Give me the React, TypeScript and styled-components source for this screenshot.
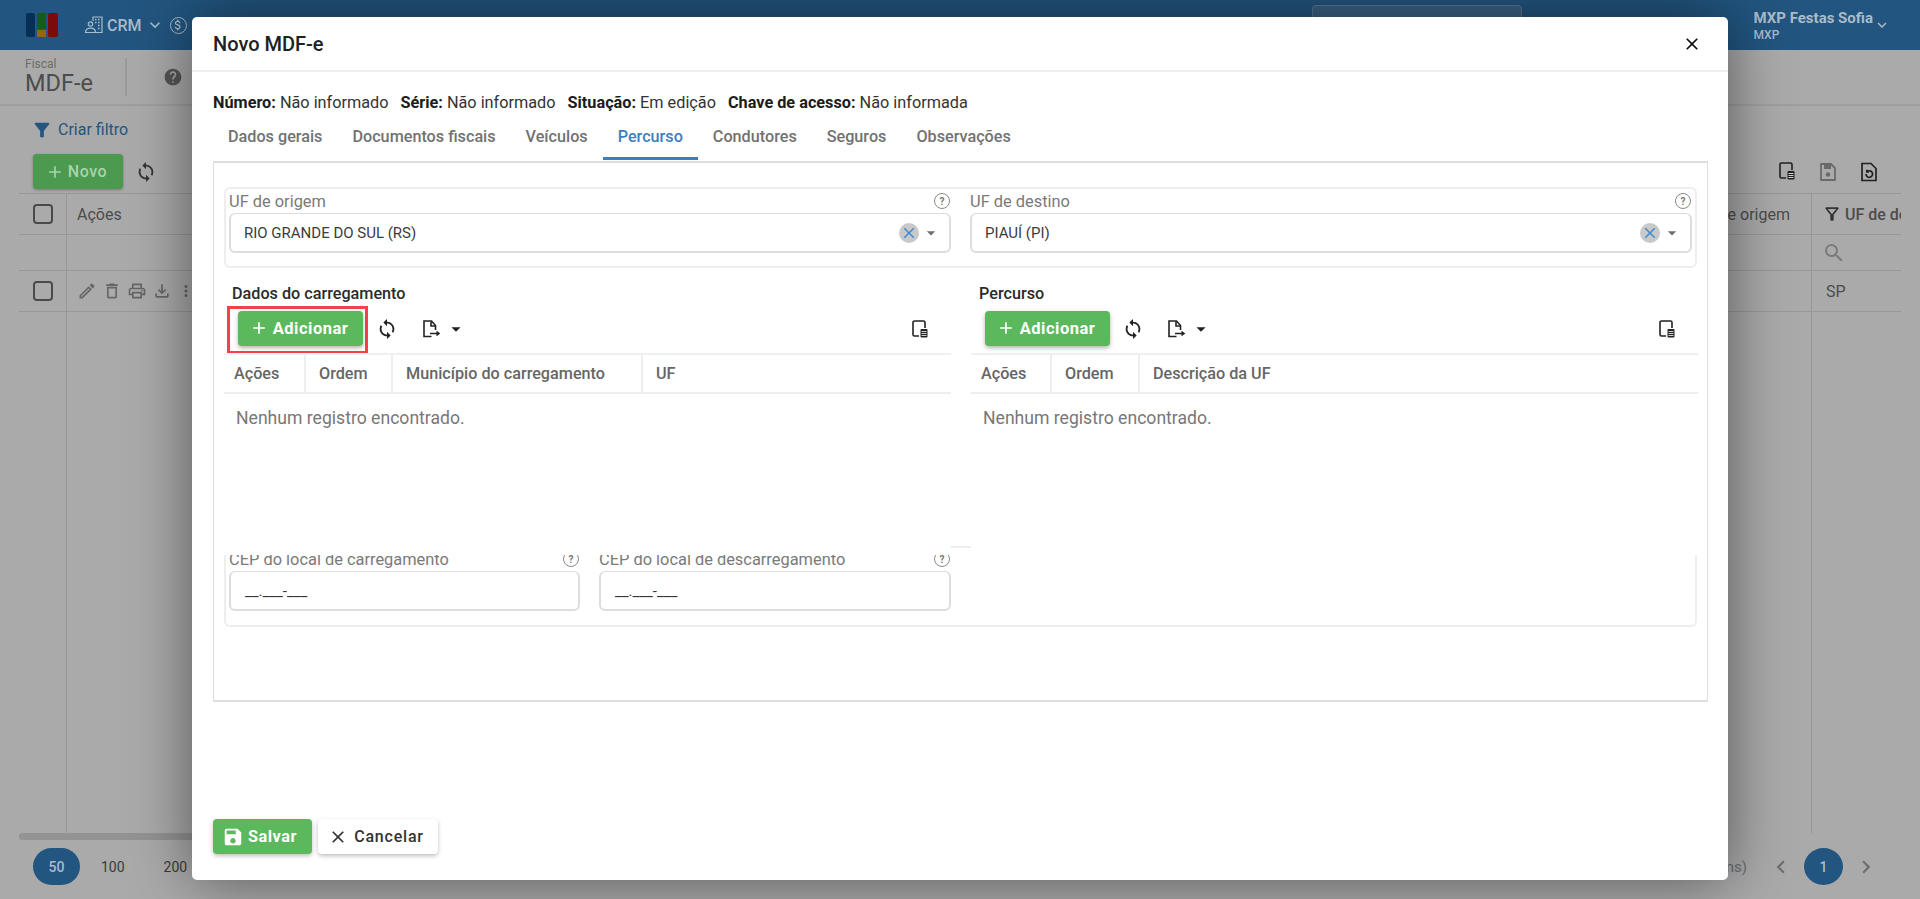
import React from "react";
import styled, { createGlobalStyle } from "styled-components";
import { MdSync, MdAdd, MdClose, MdSave, MdOutlineEdit, MdOutlineDelete, MdOutlinePrint, MdOutlineFileDownload, MdMoreVert, MdArrowDropDown, MdHelp, MdSearch, MdFilterAlt, MdOutlineFilterAlt, MdKeyboardArrowDown, MdChevronLeft, MdChevronRight, MdOutlineAttachMoney, MdOutlineNotifications, MdOutlineSettings, MdOutlineInfo } from "react-icons/md";

const Global = createGlobalStyle`
  html, body { margin: 0; padding: 0; height: 100%; overflow: hidden; }
  body { font-family: Roboto, "Liberation Sans", sans-serif; color: #333; }
  * { box-sizing: border-box; }
`;

const Page = styled.div`
  position: relative;
  height: 100vh;
  display: flex;
  flex-direction: column;
  background: #aaaaaa;
  overflow: hidden;
`;

const TopBar = styled.header`
  height: 50px;
  flex: none;
  display: flex;
  align-items: center;
  background: #22557f;
  color: #a9bccb;
  padding-left: 26px;
`;

const Logo = styled.svg`
  width: 32px;
  height: 24px;
  flex: none;
  margin-right: 26px;
`;

const NavItem = styled.div`
  display: flex;
  align-items: center;
  gap: 3px;
  font-size: 16px;
  font-weight: 500;
  margin-right: 1px;
`;

const CoinIcon = styled.span`
  width: 17px;
  height: 17px;
  border: 1.5px solid #a9bccb;
  border-radius: 50%;
  display: flex;
  align-items: center;
  justify-content: center;
  margin-left: 4px;
`;

const HeaderTools = styled.div`
  display: flex;
  align-items: center;
  gap: 13px;
  margin-left: 1009px;
`;

const SearchBox = styled.div`
  width: 210px;
  height: 40px;
  margin: 0 174px 0 23px;
  background: #3a6284;
  border: 1px solid #557a98;
  border-radius: 4px;
`;

const UserBlock = styled.div`
  display: flex;
  flex-direction: column;
  margin-left: 27px;
  font-size: 15px;
  font-weight: 700;
  line-height: 18px;
  padding-top: 2px;
`;

const UserOrg = styled.span`
  font-size: 12px;
  font-weight: 500;
  line-height: 16px;
`;

const SubHeader = styled.div`
  height: 56px;
  flex: none;
  display: flex;
  align-items: center;
  padding-left: 25px;
  border-bottom: 2px solid #9f9f9f;
`;

const Crumb = styled.div`
  display: flex;
  flex-direction: column;
  color: #555;
  width: 102px;
  height: 38px;
  border-right: 2px solid #9a9a9a;
`;

const CrumbSmall = styled.span`
  font-size: 12px;
  line-height: 12px;
  color: #6c6c6c;
`;

const CrumbBig = styled.span`
  font-size: 23.5px;
  line-height: 26px;
  color: #4c4c4c;
`;

const HelpWrap = styled.span`
  margin-left: 36px;
  color: #555;
  display: flex;
`;

const FilterLink = styled.div`
  height: 47px;
  flex: none;
  display: flex;
  align-items: center;
  gap: 5px;
  padding-left: 31px;
  color: #24557e;
  font-size: 16px;
`;

const MainToolbar = styled.div`
  height: 43px;
  flex: none;
  display: flex;
  align-items: center;
  padding: 0 41px 0 33px;
  gap: 12px;
  margin-top: -3px;
`;

const GhostIcons = styled.div`
  margin-left: auto;
  display: flex;
  gap: 21px;
  color: #222;
`;

const BackNew = styled.div`
  height: 35px;
  width: 90px;
  border-radius: 4px;
  background: #4c9a50;
  color: #a9d3ab;
  display: flex;
  align-items: center;
  justify-content: center;
  gap: 3px;
  padding-right: 4px;
  font-size: 16px;
  font-weight: 500;
  letter-spacing: .6px;
  box-shadow: 0 1px 3px rgba(0,0,0,.3);
`;

const BackTable = styled.div`
  flex: 1;
  margin: 0 19px;
  display: flex;
  flex-direction: column;
  min-height: 0;
  border-top: 1px solid #979797;
`;

const BackRow = styled.div<{ $h?: number }>`
  display: grid;
  grid-template-columns: 48px 1fr 89px;
  height: ${(p) => (p.$h ? `${p.$h}px` : "auto")};
  flex: ${(p) => (p.$h ? "none" : "1")};
  border-bottom: ${(p) => (p.$h ? "1px solid #979797" : "none")};
`;

const BackCell = styled.div<{ $right?: boolean }>`
  border-right: ${(p) => (p.$right ? "0" : "1px solid #979797")};
  display: flex;
  align-items: center;
  justify-content: flex-start;
  padding-left: 14px;
  font-size: 16px;
  color: #4c4c4c;
  white-space: nowrap;
  overflow: hidden;
  svg { flex: none; }
`;

const BackMiddle = styled(BackCell)`
  justify-content: space-between;
  padding: 0 21px 0 10px;
`;

const BackCheck = styled.span`
  width: 20px;
  height: 20px;
  border: 2px solid #4a4a4a;
  border-radius: 4px;
  flex: none;
`;

const FilterCell = styled(BackCell)`
  padding-left: 10px;
  gap: 3px;
  font-weight: 500;
  svg { color: #333; }
`;

const SearchCell = styled(BackCell)`
  padding-left: 10px;
  color: #7a7a7a;
`;

const RowActions = styled.div`
  display: flex;
  align-items: center;
  gap: 5px;
  color: #666;
`;

const Scrollbar = styled.div`
  height: 7px;
  flex: none;
  width: 500px;
  margin-left: 19px;
  background: #939393;
  border-radius: 3px;
`;

const Pager = styled.div`
  height: 59px;
  flex: none;
  display: flex;
  align-items: flex-start;
  padding: 8px 0 0 33px;
  font-size: 14px;
  color: #3b3b3b;
`;

const PageSize = styled.span<{ $active?: boolean }>`
  height: 37px;
  width: ${(p) => (p.$active ? "47px" : "auto")};
  margin-right: ${(p) => (p.$active ? "21px" : "39px")};
  border-radius: 19px;
  display: flex;
  align-items: center;
  justify-content: center;
  font-weight: ${(p) => (p.$active ? 500 : 400)};
  background: ${(p) => (p.$active ? "#22557f" : "transparent")};
  color: ${(p) => (p.$active ? "#a9bccb" : "#3b3b3b")};
`;

const PagerRight = styled.div`
  margin-left: auto;
  display: flex;
  align-items: center;
  height: 37px;
  padding-right: 41px;
  color: #6e6e6e;
  font-size: 15px;
  gap: 10px;
`;

const PagerCount = styled.span`
  margin-right: 11px;
`;

const PageDot = styled.span`
  width: 39px;
  height: 37px;
  border-radius: 50%;
  background: #22557f;
  color: #a9bccb;
  font-weight: 500;
  font-size: 14px;
  display: flex;
  align-items: center;
  justify-content: center;
`;

/* Modal */
const Modal = styled.section`
  position: absolute;
  left: 192px;
  top: 17px;
  width: 1536px;
  height: 863px;
  background: #fff;
  border-radius: 5px;
  display: flex;
  flex-direction: column;
  box-shadow: 0 0 60px rgba(0, 0, 0, .5);
`;

const ModalHeader = styled.div`
  height: 55px;
  flex: none;
  display: flex;
  align-items: center;
  justify-content: space-between;
  padding: 0 26px 0 21px;
  border-bottom: 2px solid #eeeeee;
`;

const ModalTitle = styled.h2`
  margin: 0;
  font-size: 20px;
  font-weight: 500;
  color: #212121;
`;

const CloseBtn = styled.span`
  display: flex;
  color: #111;
`;

const ModalBody = styled.div`
  flex: 1;
  display: flex;
  flex-direction: column;
  padding: 0 20px 0 21px;
  min-height: 0;
`;

const InfoRow = styled.div`
  display: flex;
  gap: 12px;
  height: 28px;
  margin-top: 16px;
  align-items: center;
  font-size: 16.25px;
  color: #333;
`;

const InfoItem = styled.span`
  b { color: #1c1c1c; font-weight: 700; }
`;

const Tabs = styled.div`
  display: flex;
  height: 45px;
  flex: none;
`;

const Tab = styled.div<{ $active?: boolean }>`
  padding: 0 15px;
  height: 44px;
  line-height: 41px;
  font-size: 16.2px;
  font-weight: 500;
  color: ${(p) => (p.$active ? "#3a80bd" : "#727272")};
  border-bottom: 3px solid ${(p) => (p.$active ? "#3a80bd" : "transparent")};
`;

const TabBox = styled.div`
  flex: none;
  height: 541px;
  border: 1px solid #dedede;
  border-top-width: 2px;
  border-bottom-width: 2px;
  padding: 24px 10px 0;
`;

const FieldGroup = styled.div`
  height: 81px;
  border: 2px solid #eeeeee;
  border-radius: 6px;
  padding: 0 3px;
  display: grid;
  grid-template-columns: 722px 722px;
  gap: 19px;
`;

const Field = styled.div`
  display: flex;
  flex-direction: column;
`;

const LabelRow = styled.div`
  height: 24px;
  display: flex;
  align-items: center;
  justify-content: space-between;
  font-size: 16.4px;
  color: #7a7a7a;
  white-space: nowrap;
  padding-right: 1px;
`;

const HintIcon = styled.span`
  width: 16px;
  height: 16px;
  border: 1.5px solid #8a8a8a;
  border-radius: 50%;
  display: flex;
  align-items: center;
  justify-content: center;
  font-size: 10px;
  font-weight: 700;
  color: #777;
`;

const SelectBox = styled.div`
  height: 40px;
  flex: none;
  border: 2px solid #dddddd;
  border-top-width: 1.5px;
  border-radius: 6px;
  display: flex;
  align-items: center;
  padding: 0 8px 0 13px;
  font-size: 15px;
  color: #3c3c3c;
`;

const SelectValue = styled.span`
  flex: 1;
`;

const ClearBadge = styled.span`
  width: 20px;
  height: 20px;
  border-radius: 50%;
  background: #c9c9c9;
  color: #3f8bd0;
  display: flex;
  align-items: center;
  justify-content: center;
`;

const Caret = styled.span`
  display: flex;
  color: #6e6e6e;
  margin-left: 2px;
`;

const Panels = styled.div`
  display: grid;
  grid-template-columns: 727px 727px;
  gap: 20px;
  margin-top: 15px;
`;

const Panel = styled.div`
  display: flex;
  flex-direction: column;
  height: 263px;
`;

const PanelTitle = styled.div`
  font-size: 16.2px;
  font-weight: 500;
  color: #2b2b2b;
  height: 20px;
  line-height: 22px;
  padding-left: 8px;
`;

const PanelTools = styled.div`
  height: 50px;
  flex: none;
  display: flex;
  align-items: center;
  padding: 0 21px 0 14px;
  color: #222;
`;

const AddButton = styled.div`
  height: 35px;
  width: 125px;
  flex: none;
  display: flex;
  align-items: center;
  justify-content: center;
  gap: 4px;
  padding-right: 4px;
  background: #5cb85c;
  color: #fff;
  border-radius: 4px;
  font-size: 16.5px;
  font-weight: 700;
  letter-spacing: .5px;
  box-shadow: 0 2px 4px rgba(0, 0, 0, .3);
`;

const Highlight = styled.div`
  padding: 2px 2px 0 8px;
  margin: 3px 0 0 -11px;
  border: 3px solid #f44346;
  height: 48px;
  display: flex;
  align-items: flex-start;
  flex: none;
`;

const ToolIcon = styled.span<{ $ml?: number }>`
  display: flex;
  align-items: center;
  padding-top: 2px;
  margin-left: ${(p) => p.$ml ?? 0}px;
`;

const ToolEnd = styled.span`
  margin-left: auto;
  padding-top: 2px;
  display: flex;
`;

const GridHead = styled.div<{ $cols: string }>`
  height: 41px;
  flex: none;
  display: grid;
  grid-template-columns: ${(p) => p.$cols};
  border-top: 2px solid #f0f0f0;
  border-bottom: 2px solid #eeeeee;
`;

const HeadCell = styled.div`
  border-right: 2px solid #eeeeee;
  display: flex;
  align-items: center;
  padding-left: 13px;
  font-size: 16.2px;
  font-weight: 500;
  color: #666;
  white-space: nowrap;
  &:first-child { padding-left: 10px; }
  &:last-child { border-right: 0; }
`;

const Empty = styled.div`
  padding: 14px 0 0 12px;
  font-size: 17.6px;
  color: #777;
`;

const Notch = styled.div`
  width: 20px;
  height: 2px;
  margin-left: 727px;
  background: #eeeeee;
`;

const CepGroup = styled.div`
  height: 72px;
  margin-top: 7px;
  overflow: hidden;
  border: 2px solid #eeeeee;
  border-top: 0;
  border-radius: 0 0 6px 6px;
  padding-left: 3px;
  display: grid;
  grid-template-columns: 351px 352px;
  column-gap: 19px;
  align-content: start;
`;

const CepLabel = styled(LabelRow)`
  margin-top: -8px;
`;

const CepInput = styled.div`
  height: 40px;
  border: 2px solid #dddddd;
  border-top-width: 1.5px;
  border-radius: 6px;
  display: flex;
  align-items: center;
  padding: 0 14px;
  font-size: 15px;
  color: #333;
`;

const ModalFooter = styled.div`
  margin-top: auto;
  padding-bottom: 26px;
  display: flex;
  gap: 6px;
`;

const SaveButton = styled.div`
  height: 35px;
  width: 99px;
  display: flex;
  align-items: center;
  justify-content: center;
  gap: 4px;
  padding-right: 6px;
  background: #5cb85c;
  color: #fff;
  border-radius: 4px;
  font-size: 16.3px;
  font-weight: 700;
  letter-spacing: .5px;
  box-shadow: 0 2px 4px rgba(0, 0, 0, .25);
`;

const CancelButton = styled(SaveButton)`
  width: 120px;
  background: #fff;
  color: #333;
  font-size: 16px;
  font-weight: 500;
  letter-spacing: .8px;
  gap: 6px;
  padding-right: 4px;
`;

const ColumnsIcon = () => (
  <svg width="20" height="20" viewBox="0 0 20 20" fill="none">
    <path d="M9 17H4.500A1.500 1.500 0 0 1 3 15.500V3.500A1.500 1.500 0 0 1 4.500 2h9A1.500 1.500 0 0 1 15 3.500V9" stroke="currentColor" strokeWidth="1.600" />
    <rect x="10.500" y="10" width="7" height="8.500" rx="1" fill="currentColor" />
    <path d="M11.500 12.500h5M11.500 14.500h5M11.500 16.500h5" stroke="#fff" strokeWidth=".8" />
  </svg>
);

const ExportIcon = () => (
  <svg width="22" height="22" viewBox="0 0 22 22" fill="none" stroke="currentColor" strokeWidth="1.600">
    <path d="M11.500 18.500H4V3h7.500l4 4.500v4.500" />
    <path d="M11 3.500v4.500h4.500" />
    <path d="M10 15.500h9M16.500 13.500l2.500 2-2.500 2" />
  </svg>
);

const SaveOutline = () => (
  <svg width="20" height="22" viewBox="0 0 20 22" fill="none">
    <path d="M3 3h10l4 4v12H3z" stroke="#6a6a6a" strokeWidth="1.800" />
    <rect x="6" y="4" width="7" height="4" fill="#6a6a6a" />
    <circle cx="10" cy="13.500" r="2.300" fill="#6a6a6a" />
  </svg>
);

const RestoreIcon = () => (
  <svg width="20" height="22" viewBox="0 0 20 22" fill="none" stroke="currentColor" strokeWidth="1.700">
    <path d="M3 2.500h9l5 5v12H3z" />
    <path d="M7 13a3.300 3.300 0 1 0 1.200-2.500M7.800 8.700v2.100h2.100" />
  </svg>
);

const CrmIcon = () => (
  <svg width="20" height="20" viewBox="0 0 20 20" fill="none" stroke="currentColor" strokeWidth="1.200">
    <path d="M9 6V2h9v15.500H12" />
    <path d="M11 4.500h1.500M14 4.500h1.500M11 7.500h1.500M14 7.500h1.500M14 10.500h1.500M14 13.500h1.500" strokeWidth="1.500" />
    <circle cx="6.500" cy="9" r="2.200" />
    <path d="M1.500 17.500c0-3 2-4.300 5-4.300s5 1.300 5 4.300z" />
  </svg>
);

const LogoMark = () => (
  <Logo viewBox="0 0 32 24">
    <rect x="0" y="0" width="9" height="24" rx="2" fill="#062f55" />
    <rect x="11" y="0" width="9" height="16" rx="1" fill="#155c17" />
    <rect x="11" y="17" width="9" height="7" fill="#8c6a12" />
    <rect x="22" y="0" width="10" height="24" rx="2" fill="#7d0a0a" />
  </Logo>
);

const UFField = ({ label, value }: { label: string; value: string }) => (
  <Field>
    <LabelRow>
      {label}
      <HintIcon>?</HintIcon>
    </LabelRow>
    <SelectBox>
      <SelectValue>{value}</SelectValue>
      <ClearBadge><MdClose size={18} /></ClearBadge>
      <Caret><MdArrowDropDown size={20} /></Caret>
    </SelectBox>
  </Field>
);

const CepField = ({ label }: { label: string }) => (
  <Field>
    <CepLabel>
      {label}
      <HintIcon>?</HintIcon>
    </CepLabel>
    <CepInput>__.___-___</CepInput>
  </Field>
);

const GridPanel = ({ title, cols, heads, marked }: { title: string; cols: string; heads: string[]; marked?: boolean }) => {
  const add = (
    <AddButton><MdAdd size={20} />Adicionar</AddButton>
  );
  return (
    <Panel>
      <PanelTitle>{title}</PanelTitle>
      <PanelTools>
        {marked ? <Highlight>{add}</Highlight> : add}
        <ToolIcon $ml={marked ? 8 : 12}><MdSync size={22} /></ToolIcon>
        <ToolIcon $ml={marked ? 22 : 21}><ExportIcon /></ToolIcon>
        <ToolIcon $ml={3}><MdArrowDropDown size={22} /></ToolIcon>
        <ToolEnd><ColumnsIcon /></ToolEnd>
      </PanelTools>
      <GridHead $cols={cols}>
        {heads.map((h) => <HeadCell key={h}>{h}</HeadCell>)}
      </GridHead>
      <Empty>Nenhum registro encontrado.</Empty>
    </Panel>
  );
};

export default function App() {
  return (
    <Page>
      <Global />
      <TopBar>
        <LogoMark />
        <NavItem><CrmIcon />CRM<MdKeyboardArrowDown size={20} /></NavItem>
        <CoinIcon><MdOutlineAttachMoney size={14} /></CoinIcon>
        <HeaderTools>
          <MdOutlineSettings size={18} />
          <MdOutlineInfo size={18} />
          <MdOutlineInfo size={18} />
          <SearchBox />
          <MdOutlineNotifications size={18} />
        </HeaderTools>
        <UserBlock>
          MXP Festas Sofia
          <UserOrg>MXP</UserOrg>
        </UserBlock>
        <MdKeyboardArrowDown size={18} />
      </TopBar>
      <SubHeader>
        <Crumb>
          <CrumbSmall>Fiscal</CrumbSmall>
          <CrumbBig>MDF-e</CrumbBig>
        </Crumb>
        <HelpWrap><MdHelp size={20} /></HelpWrap>
      </SubHeader>
      <FilterLink><MdFilterAlt size={22} />Criar filtro</FilterLink>
      <MainToolbar>
        <BackNew><MdAdd size={20} />Novo</BackNew>
        <MdSync size={22} />
        <GhostIcons>
          <ColumnsIcon />
          <SaveOutline />
          <RestoreIcon />
        </GhostIcons>
      </MainToolbar>
      <BackTable>
        <BackRow $h={41}>
          <BackCell><BackCheck /></BackCell>
          <BackMiddle><span>Ações</span><span>UF de origem</span></BackMiddle>
          <FilterCell $right><MdOutlineFilterAlt size={20} />UF de destino</FilterCell>
        </BackRow>
        <BackRow $h={36}>
          <BackCell />
          <BackCell />
          <SearchCell $right><MdSearch size={24} /></SearchCell>
        </BackRow>
        <BackRow $h={41}>
          <BackCell><BackCheck /></BackCell>
          <BackMiddle>
            <RowActions>
              <MdOutlineEdit size={20} />
              <MdOutlineDelete size={20} />
              <MdOutlinePrint size={20} />
              <MdOutlineFileDownload size={20} />
              <MdMoreVert size={18} />
            </RowActions>
          </BackMiddle>
          <BackCell $right>SP</BackCell>
        </BackRow>
        <BackRow>
          <BackCell />
          <BackCell />
          <BackCell $right />
        </BackRow>
      </BackTable>
      <Scrollbar />
      <Pager>
        <PageSize $active>50</PageSize>
        <PageSize>100</PageSize>
        <PageSize>200</PageSize>
        <PagerRight>
          <PagerCount>(1 de 1 itens)</PagerCount>
          <MdChevronLeft size={26} />
          <PageDot>1</PageDot>
          <MdChevronRight size={26} />
        </PagerRight>
      </Pager>

      <Modal>
        <ModalHeader>
          <ModalTitle>Novo MDF-e</ModalTitle>
          <CloseBtn><MdClose size={20} /></CloseBtn>
        </ModalHeader>
        <ModalBody>
          <InfoRow>
            <InfoItem><b>Número:</b> Não informado</InfoItem>
            <InfoItem><b>Série:</b> Não informado</InfoItem>
            <InfoItem><b>Situação:</b> Em edição</InfoItem>
            <InfoItem><b>Chave de acesso:</b> Não informada</InfoItem>
          </InfoRow>
          <Tabs>
            <Tab>Dados gerais</Tab>
            <Tab>Documentos fiscais</Tab>
            <Tab>Veículos</Tab>
            <Tab $active>Percurso</Tab>
            <Tab>Condutores</Tab>
            <Tab>Seguros</Tab>
            <Tab>Observações</Tab>
          </Tabs>
          <TabBox>
            <FieldGroup>
              <UFField label="UF de origem" value="RIO GRANDE DO SUL (RS)" />
              <UFField label="UF de destino" value="PIAUÍ (PI)" />
            </FieldGroup>
            <Panels>
              <GridPanel
                marked
                title="Dados do carregamento"
                cols="82px 87px 250px 1fr"
                heads={["Ações", "Ordem", "Município do carregamento", "UF"]}
              />
              <GridPanel
                title="Percurso"
                cols="81px 88px 1fr"
                heads={["Ações", "Ordem", "Descrição da UF"]}
              />
            </Panels>
            <Notch />
            <CepGroup>
              <CepField label="CEP do local de carregamento" />
              <CepField label="CEP do local de descarregamento" />
            </CepGroup>
          </TabBox>
          <ModalFooter>
            <SaveButton><MdSave size={22} />Salvar</SaveButton>
            <CancelButton><MdClose size={20} />Cancelar</CancelButton>
          </ModalFooter>
        </ModalBody>
      </Modal>
    </Page>
  );
}
